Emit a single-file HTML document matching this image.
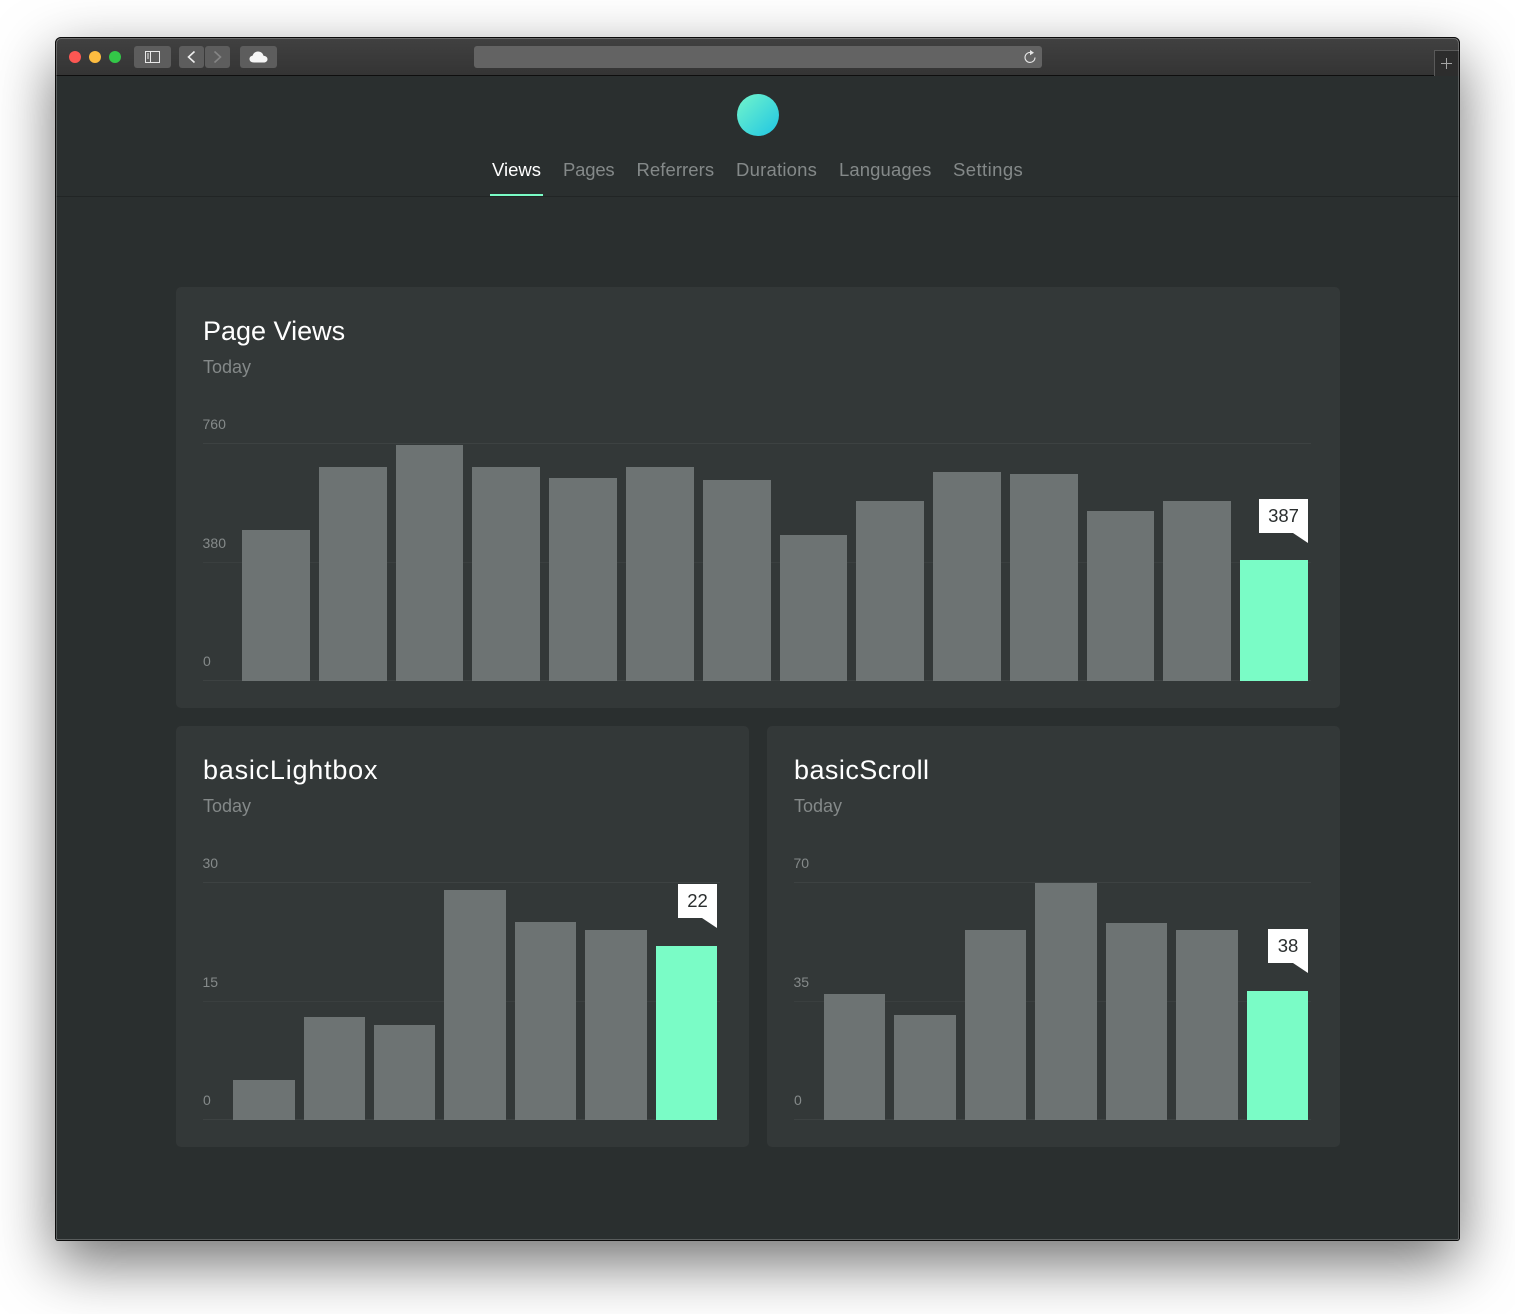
<!DOCTYPE html>
<html><head><meta charset="utf-8"><title>Ackee</title>
<style>
html,body{margin:0;padding:0;background:#fff}
body{width:1515px;height:1314px;position:relative;overflow:hidden;font-family:"Liberation Sans",sans-serif}
div,span{position:absolute;box-sizing:border-box}
.win{left:55px;top:37px;width:1405px;height:1204px;background:#2a2f2f;border-radius:6px 6px 3px 3px;box-shadow:0 22px 60px rgba(0,0,0,.56);overflow:hidden}
.win:after{content:"";position:absolute;left:0;top:0;right:0;bottom:0;border:1px solid #0c0c0c;border-radius:6px 6px 3px 3px;box-shadow:inset 0 1px 0 rgba(255,255,255,.22),inset 1px 0 0 rgba(255,255,255,.22),inset -1px 0 0 rgba(255,255,255,.22),inset 0 -1px 0 rgba(255,255,255,.22);pointer-events:none}
.bar{left:0;top:0;width:1405px;height:39px;background:linear-gradient(#414141,#343434);border-bottom:1px solid #0e0e0e}
.tl{width:12px;height:12px;border-radius:50%;top:14px}
.btn{height:22px;top:9px;background:#5d5d5d;border-radius:3px}
.nav{top:122px;font-size:18.5px;line-height:22px;color:#848989;white-space:nowrap}
.card{background:#333838;border-radius:5px}
.h{font-size:27px;line-height:32px;color:#fff;white-space:nowrap}
.t{font-size:18px;line-height:22px;color:#848989;white-space:nowrap}
.y{font-size:14px;line-height:16px;color:#858a8a}
.l{height:1px;background:#3d4242}
.m{background:#3a3f3f}
.b{background:#6d7373}
.g{background:#7afcc6}
.tip{background:#fff;color:#2a2e2e;font-size:18.5px;line-height:34px;text-align:center;height:34px}
.tip:after{content:"";position:absolute;right:0;top:34px;border-style:solid;border-width:10px 0 0 15px;border-color:#fff transparent transparent transparent;transform-origin:top right}
</style></head><body>
<div class="win">
 <div class="bar">
  <div class="tl" style="left:14px;background:#fc5753"></div>
  <div class="tl" style="left:34px;background:#fdbc40"></div>
  <div class="tl" style="left:54px;background:#33c748"></div>
  <div class="btn" style="left:79px;width:37px"><svg width="37" height="22" style="position:absolute;left:0;top:0"><rect x="11.500" y="5.500" width="14" height="11" fill="none" stroke="#e8e8e8"/><path d="M16.500 5.500v11" stroke="#e8e8e8"/><path d="M13 8h2M13 10h2M13 12h2" stroke="#e8e8e8"/></svg></div>
  <div class="btn" style="left:124px;width:25px"><svg width="25" height="22" style="position:absolute;left:0;top:0"><path d="M15.500 5.500L9.500 11l6 5.500" fill="none" stroke="#eee" stroke-width="1.600"/></svg></div>
  <div class="btn" style="left:150px;width:25px"><svg width="25" height="22" style="position:absolute;left:0;top:0"><path d="M9.500 5.500l6 5.500-6 5.500" fill="none" stroke="#858585" stroke-width="1.600"/></svg></div>
  <div class="btn" style="left:185px;width:37px"><svg width="37" height="22" style="position:absolute;left:0;top:0"><path d="M14 16.500c-3 0-4.500-1.500-4.500-3.500 0-1.800 1.300-3 3-3.200C13.200 7.500 15 5.500 18 5.500c3 0 5 2 5.500 4.300 2.200.2 4 1.300 4 3.400 0 2-1.700 3.300-4 3.300z" fill="#f6f6f6"/></svg></div>
  <div class="btn" style="left:419px;width:568px;background:#636363"><svg width="16" height="16" style="position:absolute;left:548px;top:3px"><path d="M9.200 3.600A5 5 0 1 0 13 8.500" fill="none" stroke="#e6e6e6" stroke-width="1.100"/><path d="M8 1l4 2.700-4 2.500z" fill="#e6e6e6"/></svg></div>
  <div style="left:1379px;top:13px;width:26px;height:26px;background:#2d2d2d;border:1px solid #5a5a5a;border-right:0;border-bottom:0"><svg width="25" height="25" style="position:absolute;left:0;top:0"><path d="M11.500 7v11M6 12.500h11" stroke="#a5a5a5"/></svg></div>
 </div>

 <div style="left:682px;top:57px;width:42px;height:42px;border-radius:50%;background:linear-gradient(135deg,#73f5cb,#1fc5e3)"></div>

 <div class="nav" style="left:437px;color:#fff">Views</div>
 <div class="nav" style="left:508px;letter-spacing:-.2px">Pages</div>
 <div class="nav" style="left:581.500px;letter-spacing:.06px">Referrers</div>
 <div class="nav" style="left:681px;letter-spacing:.22px">Durations</div>
 <div class="nav" style="left:784px;letter-spacing:.1px">Languages</div>
 <div class="nav" style="left:898px;letter-spacing:.42px">Settings</div>
 <div style="left:0;top:159px;width:1405px;height:1px;background:#212525"></div>
 <div style="left:435px;top:157px;width:53px;height:2px;background:#7afcc6"></div>

 <div class="card" style="left:121px;top:250px;width:1164px;height:421px"></div>
 <div class="card" style="left:121px;top:689px;width:573px;height:421px"></div>
 <div class="card" style="left:712px;top:689px;width:573px;height:421px"></div>

 <div class="h" style="left:148px;top:278px">Page Views</div>
 <div class="t" style="left:148px;top:319px">Today</div>
 <div class="y" style="left:147.500px;top:379px">760</div>
 <div class="y" style="left:147.500px;top:498px;letter-spacing:.1px">380</div>
 <div class="y" style="left:148px;top:616px">0</div>
 <div class="l" style="left:148px;top:406px;width:1108px"></div>
 <div class="l m" style="left:148px;top:525px;width:1108px"></div>
 <div class="l" style="left:148px;top:643px;width:1108px"></div>
 <div class="b" style="left:187px;top:493px;width:68px;height:151px"></div>
 <div class="b" style="left:264px;top:430px;width:68px;height:214px"></div>
 <div class="b" style="left:341px;top:408px;width:67px;height:236px"></div>
 <div class="b" style="left:417px;top:430px;width:68px;height:214px"></div>
 <div class="b" style="left:494px;top:441px;width:68px;height:203px"></div>
 <div class="b" style="left:571px;top:430px;width:68px;height:214px"></div>
 <div class="b" style="left:648px;top:443px;width:68px;height:201px"></div>
 <div class="b" style="left:725px;top:498px;width:67px;height:146px"></div>
 <div class="b" style="left:801px;top:464px;width:68px;height:180px"></div>
 <div class="b" style="left:878px;top:435px;width:68px;height:209px"></div>
 <div class="b" style="left:955px;top:437px;width:68px;height:207px"></div>
 <div class="b" style="left:1032px;top:474px;width:67px;height:170px"></div>
 <div class="b" style="left:1108px;top:464px;width:68px;height:180px"></div>
 <div class="g" style="left:1185px;top:523px;width:68px;height:121px"></div>
 <div class="tip" style="left:1204px;top:462px;width:49px">387</div>

 <div class="h" style="left:148px;top:717px;letter-spacing:.78px">basicLightbox</div>
 <div class="t" style="left:148px;top:758px">Today</div>
 <div class="y" style="left:147.500px;top:818px">30</div>
 <div class="y" style="left:147.500px;top:937px">15</div>
 <div class="y" style="left:148px;top:1055px">0</div>
 <div class="l" style="left:148px;top:845px;width:517px"></div>
 <div class="l m" style="left:148px;top:964px;width:517px"></div>
 <div class="l" style="left:148px;top:1082px;width:517px"></div>
 <div class="b" style="left:178px;top:1043px;width:62px;height:40px"></div>
 <div class="b" style="left:249px;top:980px;width:61px;height:103px"></div>
 <div class="b" style="left:319px;top:988px;width:61px;height:95px"></div>
 <div class="b" style="left:389px;top:853px;width:62px;height:230px"></div>
 <div class="b" style="left:460px;top:885px;width:61px;height:198px"></div>
 <div class="b" style="left:530px;top:893px;width:62px;height:190px"></div>
 <div class="g" style="left:601px;top:909px;width:61px;height:174px"></div>
 <div class="tip" style="left:623px;top:847px;width:39px">22</div>

 <div class="h" style="left:739px;top:717px;letter-spacing:.45px">basicScroll</div>
 <div class="t" style="left:739px;top:758px">Today</div>
 <div class="y" style="left:738.500px;top:818px">70</div>
 <div class="y" style="left:738.500px;top:937px">35</div>
 <div class="y" style="left:739px;top:1055px">0</div>
 <div class="l" style="left:739px;top:845px;width:517px"></div>
 <div class="l m" style="left:739px;top:964px;width:517px"></div>
 <div class="l" style="left:739px;top:1082px;width:517px"></div>
 <div class="b" style="left:769px;top:957px;width:61px;height:126px"></div>
 <div class="b" style="left:839px;top:978px;width:62px;height:105px"></div>
 <div class="b" style="left:910px;top:893px;width:61px;height:190px"></div>
 <div class="b" style="left:980px;top:846px;width:62px;height:237px"></div>
 <div class="b" style="left:1051px;top:886px;width:61px;height:197px"></div>
 <div class="b" style="left:1121px;top:893px;width:62px;height:190px"></div>
 <div class="g" style="left:1192px;top:954px;width:61px;height:129px"></div>
 <div class="tip" style="left:1213px;top:892px;width:40px">38</div>
</div>
</body></html>
